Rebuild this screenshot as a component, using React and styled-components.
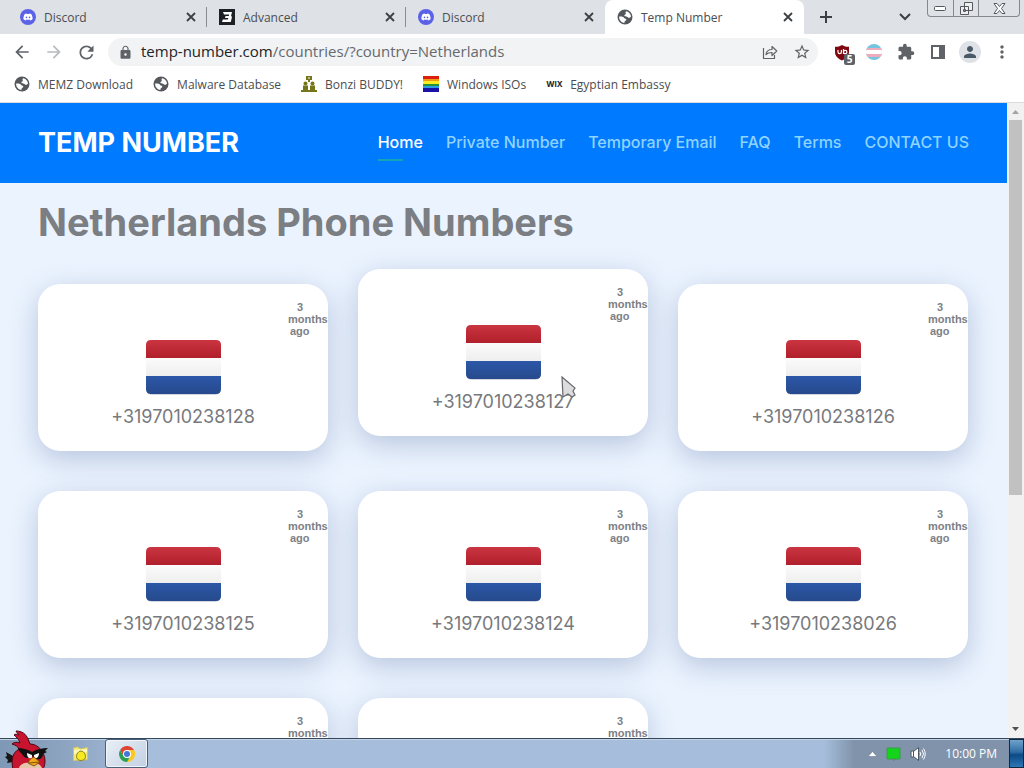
import styled, { createGlobalStyle } from "styled-components";
import {
  MdArrowBack,
  MdArrowForward,
  MdExtension,
  MdLock,
  MdMoreVert,
  MdPerson,
  MdRefresh,
  MdStarBorder,
} from "react-icons/md";
import { FaDiscord } from "react-icons/fa";

const GlobalStyle = createGlobalStyle`
  * {
    box-sizing: border-box;
  }
  body {
    margin: 0;
    overflow: hidden;
  }
  button {
    font: inherit;
    color: inherit;
    padding: 0;
    border: none;
    background: none;
  }
  svg {
    display: block;
    flex: none;
  }
`;

const Window = styled.div`
  display: flex;
  flex-direction: column;
  height: 100vh;
  background: white;
  color: #4a4d51;
  font-family: "Open Sans", sans-serif;
  font-size: 12px;
`;

/* tab strip */
const TabStrip = styled.div`
  display: flex;
  align-items: center;
  height: 34px;
  padding-left: 8px;
  background: #dee1e6;
`;
const Tab = styled.div`
  flex: 0 1 199px;
  min-width: 0;
  display: flex;
  align-items: center;
  height: 34px;
  padding: 0 8px 0 12px;
  border-radius: ${(props) => (props.$active ? "8px 8px 0 0" : "0")};
  background: ${(props) => (props.$active ? "white" : "transparent")};
`;
const Divider = styled.div`
  width: 1px;
  height: 20px;
  margin-left: -1px;
  background: #8a8d91;
`;
const TabTitle = styled.button`
  flex: 1;
  display: flex;
  align-items: center;
  gap: 8px;
  height: 34px;
  text-align: left;
`;
const IconButton = styled.button`
  display: flex;
  align-items: center;
  justify-content: center;
  width: ${(props) => props.$size || 32}px;
  height: ${(props) => props.$size || 32}px;
  color: #5f6368;
`;
const NewTab = styled(IconButton)`
  margin-left: 6px;
`;
const Spacer = styled.div`
  flex: 1;
`;
const WindowButtons = styled.div`
  align-self: flex-start;
  display: flex;
  height: 17px;
  margin: 0 4px 0 6px;
  border: 1px solid #85888e;
  border-top: none;
  border-radius: 0 0 4px 4px;
`;
const WindowButton = styled.button`
  display: flex;
  align-items: center;
  justify-content: center;
  width: ${(props) => (props.$wide ? 41 : 25)}px;
  border-left: ${(props) => (props.$first ? "none" : "1px solid #85888e")};
`;

/* toolbar */
const Toolbar = styled.div`
  display: flex;
  align-items: center;
  height: 36px;
  padding: 0 6px;
`;
const AddressBar = styled.form`
  flex: 1;
  display: flex;
  align-items: center;
  height: 28px;
  margin: 0 8px 0 6px;
  padding-left: 10px;
  border-radius: 14px;
  background: #f1f3f4;
`;
const Url = styled.label`
  position: relative;
  flex: 1;
  display: flex;
  margin-left: 8px;
  font-size: 15px;
  line-height: 26px;
`;
const UrlText = styled.span`
  padding-bottom: 2px;
  color: #66696e;
  white-space: nowrap;
`;
const Host = styled.span`
  color: #222428;
`;
const UrlInput = styled.input`
  position: absolute;
  inset: 0;
  width: 100%;
  border: none;
  outline: none;
  background: transparent;
`;
const Avatar = styled.span`
  display: flex;
  align-items: center;
  justify-content: center;
  width: 22px;
  height: 22px;
  border-radius: 50%;
  background: #dee1e6;
  color: #4b5868;
`;
const Bookmarks = styled.nav`
  display: flex;
  align-items: center;
  gap: 20px;
  height: 33px;
  padding: 0 14px 4px;
  border-bottom: 1px solid #dadce0;
`;
const Bookmark = styled.a`
  display: flex;
  align-items: center;
  gap: 8px;
  color: inherit;
  text-decoration: none;
  white-space: nowrap;
`;

/* page */
const Viewport = styled.div`
  flex: 1;
  min-height: 0;
  display: flex;
`;
const Page = styled.main`
  flex: 1;
  min-width: 0;
  overflow: hidden;
  background: #ebf3fe;
  font-family: Inter, sans-serif;
`;
const Header = styled.header`
  display: flex;
  align-items: center;
  justify-content: space-between;
  height: 80px;
  padding: 0 38px;
  background: #007aff;
`;
const Logo = styled.a`
  color: white;
  font-size: 27px;
  font-weight: 700;
  line-height: 40px;
  text-decoration: none;
`;
const Menu = styled.nav`
  display: flex;
  gap: 23px;
`;
const MenuLink = styled.a`
  position: relative;
  color: ${(props) => (props.$active ? "white" : "#8fd3ff")};
  font-size: 16px;
  font-weight: 500;
  line-height: 32px;
  padding-bottom: 2px;
  text-decoration: none;
  white-space: nowrap;
  &::after {
    content: "";
    display: ${(props) => (props.$active ? "block" : "none")};
    position: absolute;
    left: 0;
    bottom: -1px;
    width: 25px;
    height: 2px;
    background: #12a5b8;
  }
`;
const Title = styled.h1`
  margin: 0;
  padding: 12px 38px 0;
  color: #7b7e82;
  font-size: 38px;
  font-weight: 700;
  line-height: 54px;
`;
const Grid = styled.div`
  display: grid;
  grid-template-columns: repeat(3, 1fr);
  gap: 40px 30px;
  padding: 35px 39px 35px 38px;
`;
const Card = styled.a`
  display: flex;
  flex-direction: column;
  align-items: center;
  height: 167px;
  border-radius: 22px;
  background: white;
  box-shadow: 0 8px 28px rgba(50, 80, 140, 0.28);
  color: #77797c;
  text-decoration: none;
  transform: ${(props) => (props.$raised ? "translateY(-15px)" : "none")};
`;
const Age = styled.small`
  align-self: flex-end;
  width: 40px;
  height: 36px;
  margin: 17px 0 1px;
  color: #7c7f86;
  font-family: "Liberation Sans", sans-serif;
  font-size: 11px;
  font-weight: 700;
  line-height: 12px;
`;
const AgeLine = styled.span`
  display: block;
  padding-left: ${(props) => props.$indent || 0}px;
`;
const Phone = styled.span`
  margin-top: 4px;
  font-size: 18px;
  line-height: 30px;
`;
const Scrollbar = styled.div`
  display: flex;
  flex-direction: column;
  align-items: center;
  justify-content: space-between;
  width: 17px;
  background: #f1f1f1;
`;
const Thumb = styled.div`
  flex: 0 0 59%;
  width: 13px;
  margin-bottom: auto;
  background: #c1c1c1;
`;
const ScrollArrow = styled.svg`
  width: 17px;
  height: 17px;
`;

/* taskbar */
const Taskbar = styled.footer`
  display: flex;
  align-items: stretch;
  height: 30px;
  border-top: 1px solid #33485c;
  background: linear-gradient(
    to right,
    #7f98b5 0,
    #8ba3bf 60px,
    #a6bedb 150px,
    #a6bedb calc(100% - 200px),
    #8093ab calc(100% - 170px),
    #8093ab 100%
  );
  box-shadow: inset 0 1px #c5d4e4;
  color: white;
`;
const StartButton = styled.button`
  width: 57px;
  display: flex;
  align-items: flex-end;
`;
const TaskButton = styled.button`
  display: flex;
  align-items: center;
  justify-content: center;
  width: ${(props) => (props.$active ? 43 : 48)}px;
  border: ${(props) => (props.$active ? "1px solid #4a6078" : "none")};
  border-radius: 3px;
  background: ${(props) =>
    props.$active ? "linear-gradient(135deg, #e9eff6, #c1d0e2)" : "none"};
  box-shadow: ${(props) => (props.$active ? "inset 0 0 0 1px #f2f6fa" : "none")};
`;
const Tray = styled.div`
  display: flex;
  align-items: center;
  gap: 9px;
  margin-left: auto;
`;
const Clock = styled.time`
  margin: 0 12px 0 10px;
  font-size: 12px;
`;
const ShowDesktop = styled.button`
  width: 15px;
  border: 1px solid #12293f;
  background: linear-gradient(#6fa3cb, #2f6ca3 45%, #0c4a85 55%, #2c77b5);
`;
const Cursor = styled.svg`
  position: absolute;
  left: 203px;
  top: 106px;
`;

const Discord = () => (
  <svg width="16" height="16" viewBox="0 0 16 16">
    <circle cx="8" cy="8" r="8" fill="#5c62e8" />
    <FaDiscord x="3" y="3" size={10} color="white" />
  </svg>
);

const AdvancedIcon = () => (
  <svg width="16" height="16" viewBox="0 0 16 16">
    <path fill="#1d2126" d="M0 0h16v16H0z" />
    <path
      fill="white"
      d="M4 3h9l-1 4 1 .8-1.2 5.2H3l.8-2.6h5L9.4 9H6l.6-2h3.2l.4-1.4H5z"
    />
  </svg>
);

/* default favicon */
const Globe = () => (
  <svg width="16" height="16" viewBox="0 0 16 16">
    <circle cx="8" cy="8" r="7.500" fill="#54575b" />
    <path
      fill="white"
      d="M9 2.200c2.600.4 4.700 2.500 5 5.100-.6 1.100-1.300 1.600-2.200 1.500-.9 0-1-.9-1.800-1.100-1-.2-2.300.1-2.600-.9-.2-.9.700-1.200 1.300-1.600.5-.4-.2-.9-.2-1.500 0-.7.3-1.100.5-1.500z"
    />
    <path
      fill="white"
      d="M2.100 7.600c1.400-.2 2.900-.1 4 .4.900.4.8 1.200 1.700 1.500.9.200 1.500.4 1.500 1.200-.1 1-1.300 1-1.600 1.800-.2.500-.2 1-.4 1.500-3-.3-5.300-3-5.200-6.400z"
    />
  </svg>
);

const Bonzi = () => (
  <svg width="16" height="18" viewBox="0 0 16 18">
    <path
      fill="#75751a"
      fillRule="evenodd"
      d="M5 1h6v4H9v2H7V5H5zM7 2.500v1h2v-1z"
    />
    <circle cx="4.500" cy="8.500" r="2" fill="#75751a" />
    <circle cx="11.500" cy="8.500" r="2" fill="#75751a" />
    <path fill="#75751a" d="M2 10.500h5V15h1v2H0v-2h2zM9 10.500h5V15h2v2H8v-2h1z" />
  </svg>
);

const Rainbow = () => (
  <svg width="16" height="16" viewBox="0 0 16 16">
    <path fill="#d8200c" d="M0 0h16v3H0z" />
    <path fill="#f29a18" d="M0 3h16v2H0z" />
    <path fill="#f7ee20" d="M0 5h16v3H0z" />
    <path fill="#28913b" d="M0 8h16v2H0z" />
    <path fill="#2ba0df" d="M0 10h16v2H0z" />
    <path fill="#1712a8" d="M0 12h16v4H0z" />
  </svg>
);

const Wix = styled.b`
  width: 16px;
  color: #222;
  font-family: Inter, sans-serif;
  font-size: 8px;
  line-height: 16px;
`;

const Close = () => (
  <svg width="16" height="16" viewBox="0 0 16 16">
    <path d="M4 4l8 8M12 4l-8 8" stroke="#3c4043" strokeWidth="1.8" />
  </svg>
);

const ShareIcon = () => (
  <svg width="16" height="16" viewBox="0 0 16 16" fill="none" stroke="#5f6368">
    <path
      d="M1.500 4v10.500h11V11M4 10.500c.5-3.500 2.500-5 6-5V2.500l4.800 4.500-4.800 4.500V8.500c-3 0-4.500.500-6 2z"
      strokeWidth="1.200"
      strokeLinejoin="round"
    />
  </svg>
);

const Ublock = () => (
  <svg width="22" height="22" viewBox="0 0 22 22">
    <path
      fill="#800610"
      d="M9 2c2 1.300 4 1.800 7 1.800V9c0 4-3 6.500-7 8.500C5 15.500 2 13 2 9V3.800C5 3.800 7 3.300 9 2z"
    />
    <path
      d="M5 7v2a1.700 1.700 0 0 0 3.400 0V7M10.500 6v5M10.500 9a1.700 1.700 0 1 0 3.400 0 1.700 1.700 0 0 0-3.400 0"
      fill="none"
      stroke="white"
      strokeWidth="1.200"
    />
    <rect x="11" y="11" width="11" height="11" rx="2" fill="#5f6368" />
    <text
      x="16.500"
      y="20"
      fill="white"
      fontSize="10"
      fontWeight="700"
      textAnchor="middle"
    >
      5
    </text>
  </svg>
);

const Badged = styled(IconButton)`
  padding: 4px 0 0 4px;
`;

const TransFlag = () => (
  <svg width="16" height="16" viewBox="0 0 16 16">
    <clipPath id="round">
      <circle cx="8" cy="8" r="8" />
    </clipPath>
    <g clipPath="url(#round)">
      <path fill="#74c6e0" d="M0 0h16v16H0z" />
      <path fill="#efabb9" d="M0 4h16v9H0z" />
      <path fill="white" d="M0 6h16v4H0z" />
    </g>
  </svg>
);

const Flag = () => (
  <svg width="80" height="60" viewBox="0 0 80 60">
    <defs>
      <linearGradient id="red" x2="0" y2="1">
        <stop offset="0" stopColor="#ca3541" />
        <stop offset="1" stopColor="#b01f2b" />
      </linearGradient>
      <linearGradient id="white" x2="0" y2="1">
        <stop offset="0" stopColor="#fbfbfb" />
        <stop offset="1" stopColor="#eeeeee" />
      </linearGradient>
      <linearGradient id="blue" x2="0" y2="1">
        <stop offset="0" stopColor="#2c57a8" />
        <stop offset="1" stopColor="#264a8c" />
      </linearGradient>
    </defs>
    <rect x="3" y="3" width="75" height="54" rx="6" fill="#aab" opacity=".5" />
    <path fill="url(#red)" d="M3 20V7q0-5 5-5h65q5 0 5 5v13z" />
    <path fill="url(#white)" d="M3 20h75v18H3z" />
    <path fill="url(#blue)" d="M3 38h75v13q0 5-5 5H8q-5 0-5-5z" />
  </svg>
);

const Bird = () => (
  <svg width="50" height="38" viewBox="0 0 50 38">
    <path fill="#161616" d="M13 26l-7-4 1 4-2 1 3 3-1 3 6-1z" />
    <path
      fill="#c9142f"
      stroke="#4a0714"
      d="M13 39c-2-8-1-16 6-20-1-3-4-4-7-5 2-2 5-2 8-1-1-4-4-6-6-8 1-1 3-1 5 0-1-1-2-2-3-4 6 0 10 3 12 8l2 5c8 0 15 8 15 17 0 4-1 6-2 8z"
    />
    <path fill="#e6c5a8" d="M19 38c1-4 6-6 11-5 5-1 10 0 12 5z" />
    <path
      fill="#111"
      d="M18 18c4 0 9 1 14 4 5-3 10-4 16-4l-3 3 2 1-4 2c0 4-3 6-7 5l-4-3c-3 3-8 3-10-2l-3-3z"
    />
    <path fill="white" d="M27 23l5 2v3c-2 1-5 0-5-5zM34 25l5-2c0 4-2 6-5 5z" />
    <path
      fill="#f0a51c"
      stroke="#69410b"
      strokeWidth=".8"
      d="M34 27l6 5-6 4-6-3c1-3 3-5 6-6z"
    />
    <path d="M29 33l10-1" stroke="#69410b" strokeWidth=".8" />
  </svg>
);

const Explorer = () => (
  <svg width="18" height="16" viewBox="0 0 18 16">
    <path fill="#f3e97a" stroke="#d3c65a" d="M1.500 2l4-1 3 2 7-1.500v12l-14 1z" />
    <path fill="#fff8b5" d="M2 4l13-1v3L2 8z" />
    <path
      fill="#f6ea22"
      stroke="#8f8420"
      d="M9 5c3 0 4.500 3.500 4.500 5.500S12 14.500 9 14.500s-4.500-2-4.500-4S6 5 9 5z"
    />
  </svg>
);

const Chrome = () => (
  <svg width="16" height="16" viewBox="0 0 16 16">
    <path fill="#e04435" d="M1.100 4A8 8 0 0 1 15 4H8L4.500 10z" />
    <path fill="#fbc723" d="M15 4a8 8 0 0 1-7 12l3.500-6L8 4z" />
    <path fill="#2b9f50" d="M8 16A8 8 0 0 1 1.100 4l3.400 6L8 12h2.300z" />
    <circle cx="8" cy="8" r="4" fill="white" />
    <circle cx="8" cy="8" r="3" fill="#4078d8" />
  </svg>
);

const Speaker = () => (
  <svg width="16" height="14" viewBox="0 0 16 14" fill="none" stroke="white">
    <path
      d="M1 4h2.500v6H1zM3.500 4.500L8.500.5v13l-5-4z"
      fill="white"
      stroke="#4a5564"
    />
    <path d="M10 5q1.500 2 0 4M12 3q3 4 0 8M13.500 1.500q3.500 5.500 0 11" />
  </svg>
);

const tabs = [
  { title: "Discord", icon: <Discord />, divider: true },
  { title: "Advanced", icon: <AdvancedIcon />, divider: true },
  { title: "Discord", icon: <Discord /> },
  { title: "Temp Number", icon: <Globe />, active: true },
];

const bookmarks = [
  { name: "MEMZ Download", icon: <Globe /> },
  { name: "Malware Database", icon: <Globe /> },
  { name: "Bonzi BUDDY!", icon: <Bonzi /> },
  { name: "Windows ISOs", icon: <Rainbow /> },
  { name: "Egyptian Embassy", icon: <Wix>WIX</Wix> },
];

const links = [
  "Home",
  "Private Number",
  "Temporary Email",
  "FAQ",
  "Terms",
  "CONTACT US",
];

const phones = [
  "+3197010238128",
  "+3197010238127",
  "+3197010238126",
  "+3197010238125",
  "+3197010238124",
  "+3197010238026",
  "+3197010238025",
  "+3197010238024",
];

const PhoneCard = ({ phone, raised }) => (
  <Card href="#" $raised={raised}>
    <Age>
      <AgeLine $indent={9}>3</AgeLine>
      <AgeLine>months</AgeLine>
      <AgeLine $indent={2}>ago</AgeLine>
    </Age>
    <Flag />
    <Phone>{phone}</Phone>
    {raised && (
      <Cursor width="18" height="26" viewBox="0 0 18 26">
        <path
          fill="#dcdcdc"
          stroke="#66686b"
          strokeWidth="1.200"
          d="M1 2l13 11-2 3 2 4-3 2-4-3-5 3z"
        />
      </Cursor>
    )}
  </Card>
);

const App = () => {
  return (
    <>
      <GlobalStyle />
      <Window>
        <TabStrip>
          {tabs.map((tab, i) => [
            <Tab key={i} $active={tab.active}>
              <TabTitle>
                {tab.icon}
                {tab.title}
              </TabTitle>
              <IconButton $size={16} aria-label="Close tab">
                <Close />
              </IconButton>
            </Tab>,
            tab.divider && <Divider key={`divider-${i}`} />,
          ])}
          <NewTab aria-label="New tab">
            <svg width="14" height="14" viewBox="0 0 14 14">
              <path d="M7 1v12M1 7h12" stroke="#3c4043" strokeWidth="2" />
            </svg>
          </NewTab>
          <Spacer />
          <IconButton aria-label="Search tabs">
            <svg width="12" height="12" viewBox="0 0 12 12" fill="none">
              <path d="M1 3l5 5 5-5" stroke="#3c4043" strokeWidth="2" />
            </svg>
          </IconButton>
          <WindowButtons>
            <WindowButton $first aria-label="Minimize">
              <svg width="13" height="5" viewBox="0 0 13 5">
                <rect
                  x=".5"
                  y=".5"
                  width="11"
                  height="4"
                  rx="1"
                  fill="white"
                  stroke="#55585e"
                />
              </svg>
            </WindowButton>
            <WindowButton aria-label="Restore">
              <svg
                width="13"
                height="13"
                viewBox="0 0 13 13"
                fill="#eee"
                stroke="#55585e"
              >
                <path d="M4.500.5h8v8h-8zM.5 4.500h8v8h-8zM3.500 7.500h2v2h-2z" />
              </svg>
            </WindowButton>
            <WindowButton $wide aria-label="Close">
              <svg
                width="13"
                height="11"
                viewBox="0 0 13 11"
                fill="white"
                stroke="#55585e"
              >
                <path d="M1 .5h3l2.500 3L9 .5h3L8.500 5.500l3.500 5H9l-2.500-3-2.500 3H1l3.500-5z" />
              </svg>
            </WindowButton>
          </WindowButtons>
        </TabStrip>

        <Toolbar>
          <IconButton aria-label="Back">
            <MdArrowBack size={20} />
          </IconButton>
          <IconButton aria-label="Forward">
            <MdArrowForward size={20} color="#b9bbbe" />
          </IconButton>
          <IconButton aria-label="Reload">
            <MdRefresh size={21} />
          </IconButton>
          <AddressBar>
            <MdLock size={15} color="#5f6368" />
            <Url>
              <UrlText>
                <Host>temp-number.com</Host>/countries/?country=Netherlands
              </UrlText>
              <UrlInput aria-label="Address" />
            </Url>
            <IconButton type="button" aria-label="Share">
              <ShareIcon />
            </IconButton>
            <IconButton type="button" aria-label="Bookmark">
              <MdStarBorder size={18} />
            </IconButton>
          </AddressBar>
          <Badged aria-label="uBlock">
            <Ublock />
          </Badged>
          <IconButton aria-label="Flag extension">
            <TransFlag />
          </IconButton>
          <IconButton aria-label="Extensions">
            <MdExtension size={18} />
          </IconButton>
          <IconButton aria-label="Side panel">
            <svg width="14" height="14" viewBox="0 0 14 14">
              <path
                fill="#5f6368"
                d="M0 0h14v14H0zM2 2v10h6V2z"
                fillRule="evenodd"
              />
            </svg>
          </IconButton>
          <IconButton aria-label="Profile">
            <Avatar>
              <MdPerson size={18} />
            </Avatar>
          </IconButton>
          <IconButton aria-label="Menu">
            <MdMoreVert size={20} />
          </IconButton>
        </Toolbar>

        <Bookmarks>
          {bookmarks.map((b) => (
            <Bookmark href="#" key={b.name}>
              {b.icon}
              {b.name}
            </Bookmark>
          ))}
        </Bookmarks>

        <Viewport>
          <Page>
            <Header>
              <Logo href="#">TEMP NUMBER</Logo>
              <Menu>
                {links.map((link, i) => (
                  <MenuLink href="#" key={link} $active={i === 0}>
                    {link}
                  </MenuLink>
                ))}
              </Menu>
            </Header>
            <Title>Netherlands Phone Numbers</Title>
            <Grid>
              {phones.map((phone, i) => (
                <PhoneCard key={phone} phone={phone} raised={i === 1} />
              ))}
            </Grid>
          </Page>
          <Scrollbar>
            <ScrollArrow viewBox="0 0 17 17">
              <path fill="#a3a3a3" d="M5 11l3.500-4 3.500 4z" />
            </ScrollArrow>
            <Thumb />
            <ScrollArrow viewBox="0 0 17 17">
              <path fill="#505050" d="M5 6l3.500 4L12 6z" />
            </ScrollArrow>
          </Scrollbar>
        </Viewport>

        <Taskbar>
          <StartButton aria-label="Start">
            <Bird />
          </StartButton>
          <TaskButton aria-label="Explorer">
            <Explorer />
          </TaskButton>
          <TaskButton $active aria-label="Chrome">
            <Chrome />
          </TaskButton>
          <Tray>
            <svg width="9" height="6" viewBox="0 0 9 6">
              <path
                d="M0 5.500L4.500.5 9 5.500z"
                fill="white"
                stroke="#5b6b80"
                strokeWidth=".5"
              />
            </svg>
            <svg width="15" height="14" viewBox="0 0 15 14">
              <path fill="#14d51b" stroke="#3a9b4c" d="M1 1h13v11H1z" />
              <path fill="#6e8474" d="M5 12h5l-2 2z" />
            </svg>
            <Speaker />
            <Clock>10:00 PM</Clock>
          </Tray>
          <ShowDesktop aria-label="Show desktop" />
        </Taskbar>
      </Window>
    </>
  );
};

export default App;
